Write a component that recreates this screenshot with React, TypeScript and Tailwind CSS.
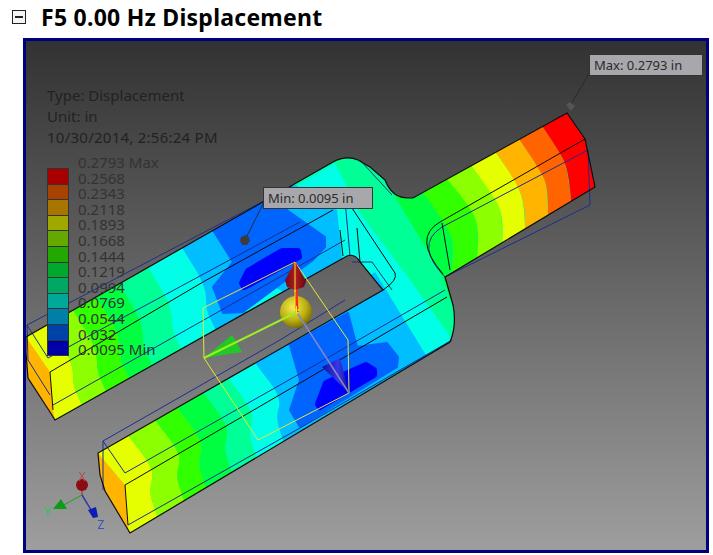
type Pt = [number, number];

const YELLOW = "#e6ff00";
const LIME = "#8cff00";
const BRIGHT = "#32ff00";
const GREEN = "#00ff40";
const SPRING = "#00ff96";
const CYAN = "#00ffe6";
const SKY = "#00beff";
const BLUE = "#0064ff";
const DEEP = "#0000ff";

const swatches = [
  "#a80000", "#a84200", "#a87600", "#a0a800", "#64a800", "#22a800",
  "#00a82b", "#00a864", "#00a89a", "#007fa8", "#0043a8", "#0000a8",
];

const values = [
  "0.2793 Max", "0.2568", "0.2343", "0.2118", "0.1893", "0.1668", "0.1444",
  "0.1219", "0.0994", "0.0769", "0.0544", "0.032", "0.0095 Min",
];

const silhouette =
  "M567 113 L585 139 L595 187 L445 277 L453 305 Q457 325 450 342 L130 533 L105 491 L100 475 L98 453 L383 290 L360 262 Q355 253 347 256 L55 420 L50 412 L28 378 L26 352 L26 337 L333 162 Q346 155 358 160 L370 167 L385 180 Q392 198 408 198 L413 198 Z";

const upperY = (x: number) => 337 - (x - 26) * 0.57;
const lowerY = (x: number) => 453 - (x - 98) * 0.572;

const upperOffsets: Pt[] = [[-4, -8], [0, 0], [24, 38], [24, 62], [31, 76], [38, 92]];
const lowerOffsets: Pt[] = [[-4, -8], [0, 0], [27, 34], [21, 54], [26, 72], [34, 92]];

function curve(x: number, y: number, offsets: Pt[]): Pt[] {
  return offsets.map(([dx, dy]) => [x + dx, y + dy] as Pt);
}

// runs a rounded line through the points, straight near both ends
function smooth(pts: Pt[], start: string) {
  let d = `${start}${pts[0][0]} ${pts[0][1]}`;
  for (let i = 1; i < pts.length - 1; i++) {
    const mx = (pts[i][0] + pts[i + 1][0]) / 2;
    const my = (pts[i][1] + pts[i + 1][1]) / 2;
    d += ` Q${pts[i][0]} ${pts[i][1]} ${mx} ${my}`;
  }
  const last = pts[pts.length - 1];
  return `${d} L${last[0]} ${last[1]}`;
}

function band(a: Pt[], b: Pt[]) {
  return `${smooth(a, "M")} ${smooth([...b].reverse(), "L")} Z`;
}

const upperStops: [number, string][] = [
  [10, YELLOW], [49, LIME], [73, BRIGHT], [96, GREEN], [119, SPRING], [148, CYAN], [182, SKY], [213, SKY],
];
const lowerStops: [number, string][] = [
  [80, YELLOW], [128, LIME], [155, BRIGHT], [177, GREEN], [203, SPRING], [228, CYAN], [255, SKY], [290, SKY],
];

const handleCurves: Pt[][] = [
  [[385, 180], [423, 243], [443, 277], [450, 300]],
  [[420, 188], [448, 227], [455, 247], [450, 280]],
  [[446, 178], [472, 208], [479, 230], [477, 260]],
  [[470, 164], [495, 197], [503, 217], [502, 250]],
  [[494, 150], [517, 182], [525, 207], [525, 235]],
  [[517, 136], [542, 172], [548, 190], [548, 222]],
  [[540, 123], [560, 152], [568, 170], [572, 210]],
  [[600, 100], [620, 140], [620, 180], [620, 210]],
];
const handleColors = [GREEN, BRIGHT, LIME, YELLOW, "#ffb400", "#ff6400", "#ff0000"];

const blackLines = [
  "M50 372 L203 282 L333 210",
  "M125 485 L300 383 L343 358 L447 297",
  "M440 222 L585 139",
  "M442 223 L450 270",
  "M440 222 Q412 238 443 274",
  "M340 230 L343 256",
  "M357 228 L360 262",
  "M350 205 L395 273 Q398 280 383 290",
  "M50 372 L53 410",
  "M125 485 L128 525",
];

const blueLines = [
  "M27 325 L260 203 L292 186",
  "M27 325 L48 358 L300 222",
  "M27 325 L28 360 L50 395",
  "M53 405 L218 312 L345 240",
  "M103 441 L280 340 L345 300",
  "M103 441 L125 473 L310 368 L445 290",
  "M103 441 L103 490",
  "M128 525 L300 428 L452 340",
  "M442 227 L588 150 L590 205 L445 277",
  "M442 227 Q414 245 445 277",
  "M345 200 L350 256",
  "M352 262 L372 262 L392 290",
  "M360 160 L392 195",
];

export default function App() {
  return (
    <div className="w-[713px] h-[555px] bg-white font-['Noto_Sans',sans-serif] overflow-hidden">
      <div className="flex items-center h-[38px] pl-[12px] pb-[4px]">
        <div className="w-[14px] h-[14px] border-[1.5px] border-[#222] flex items-center justify-center bg-[#f4f4f4]">
          <div className="w-[8px] h-[2px] bg-[#222]" />
        </div>
        <h1 className="ml-[15px] text-[23px] tracking-[0.25px] leading-none font-bold text-black">F5 0.00 Hz Displacement</h1>
      </div>
      <div className="relative ml-[23px] w-[686px] h-[515px] border-[3px] border-[#00007f] overflow-hidden">
        <svg viewBox="26 41 680 509" className="block w-[680px] h-[509px] blur-[0.3px]">
          <defs>
            <linearGradient id="bg" x1="0" y1="0" x2="0" y2="1">
              <stop offset="0" stopColor="#323232" />
              <stop offset="1" stopColor="#9e9e9e" />
            </linearGradient>
            <radialGradient id="gold" cx="0.4" cy="0.35" r="0.7">
              <stop offset="0" stopColor="#f4ee50" />
              <stop offset="0.6" stopColor="#bcae10" />
              <stop offset="1" stopColor="#6e6408" />
            </radialGradient>
            <linearGradient id="redCone" x1="0" y1="0" x2="1" y2="0">
              <stop offset="0" stopColor="#6e0a14" />
              <stop offset="0.5" stopColor="#b01a20" />
              <stop offset="1" stopColor="#5e0a10" />
            </linearGradient>
            <linearGradient id="blueCone" x1="0" y1="0" x2="1" y2="0">
              <stop offset="0" stopColor="#1010a0" />
              <stop offset="0.6" stopColor="#3838e8" />
              <stop offset="1" stopColor="#12127a" />
            </linearGradient>
            <clipPath id="part">
              <path d={silhouette} />
            </clipPath>
          </defs>

          <rect x="26" y="41" width="680" height="509" fill="url(#bg)" />

          <g clipPath="url(#part)">
            <rect x="20" y="100" width="600" height="450" fill={SPRING} />
            <polygon points="335,163 360,213 410,280 460,350 300,480 100,300" fill={CYAN} />
            <polygon points="292,183 337,210 342,258 300,300 220,260" fill={SKY} />
            <polygon points="375,272 432,365 300,470 250,360" fill={SKY} />

            {upperStops.map(([x, color], i) => {
              const next = upperStops[i + 1];
              if (!next) return null;
              return (
                <path
                  key={x}
                  d={band(curve(x, upperY(x), upperOffsets), curve(next[0], upperY(next[0]), upperOffsets))}
                  fill={color}
                />
              );
            })}
            {lowerStops.map(([x, color], i) => {
              const next = lowerStops[i + 1];
              if (!next) return null;
              return (
                <path
                  key={x}
                  d={band(curve(x, lowerY(x), lowerOffsets), curve(next[0], lowerY(next[0]), lowerOffsets))}
                  fill={color}
                />
              );
            })}

            {handleColors.map((color, i) => (
              <path key={color} d={band(handleCurves[i], handleCurves[i + 1])} fill={color} />
            ))}

            <polygon points="213,230 262,190 277,203 325,237 325,247 313,260 243,312 223,313 213,287 233,262" fill={BLUE} stroke={BLUE} strokeWidth="2" strokeLinejoin="round" />
            <polygon points="242,283 248,271 282,251 298,251 299,257 292,261 250,284 244,287" fill={DEEP} stroke={DEEP} strokeWidth="6" strokeLinejoin="round" />
            <polygon points="290,345 348,313 357,347 387,343 398,357 397,367 300,427 290,410 300,380" fill={BLUE} stroke={BLUE} strokeWidth="2" strokeLinejoin="round" />
            <polygon points="318,404 326,383 348,373 366,365 374,370 374,375 320,407" fill={DEEP} stroke={DEEP} strokeWidth="6" strokeLinejoin="round" />

            <polygon points="26,337 50,372 53,410 55,420 20,420 20,337" fill="#ffb400" />
            <polygon points="98,453 125,485 128,527 130,540 90,540 90,453" fill="#ffb400" />
          </g>

          <g fill="none" stroke="#1c2f8c" strokeWidth="1">
            {blueLines.map((d) => (
              <path key={d} d={d} />
            ))}
          </g>
          <path d={silhouette} fill="none" stroke="#0c0c0c" strokeWidth="1.2" />
          <g fill="none" stroke="#0c0c0c" strokeWidth="1">
            {blackLines.map((d) => (
              <path key={d} d={d} />
            ))}
          </g>

          {/* leaders to the min and max labels */}
          <path d="M266 198 L245 240" stroke="#2a2a2a" fill="none" />
          <polygon points="241,237 245,235 249,237 250,241 247,245 242,245 240,241" fill="#3c3c40" />
          <path d="M590 72 L570 106" stroke="#2a2a2a" fill="none" />
          <polygon points="566,105 570,102 575,106 571,111" fill="#555" />

          {/* move triad */}
          <polygon points="295,262 203,308 204,358 258,440 349,393 348,340" fill="none" stroke="#e8e830" strokeWidth="1" />
          <circle cx="296" cy="312" r="16" fill="url(#gold)" />
          <path d="M295 262 L297 312" stroke="#ff2a10" strokeWidth="3" />
          <path d="M295 262 L295 312" stroke="#e8e830" strokeWidth="1" />
          <polygon points="295,262 285,280 287,287 295,290 304,287 306,281" fill="url(#redCone)" />
          <path d="M295 262 L295 292" stroke="#e8e830" strokeWidth="1" />
          <polygon points="204,358 232,335 242,352" fill="#22c828" />
          <path d="M204 358 L297 312" stroke="#9cf020" strokeWidth="2" />
          <polygon points="349,393 322,367 340,358" fill="url(#blueCone)" />
          <path d="M349 393 L298 314" stroke="#8686c4" strokeWidth="1.5" />
          <path d="M293 310 h7 M296.500 306 v7" stroke="#f0f040" strokeWidth="1" />

          {/* view triad */}
          <path d="M82 495 L82 485" stroke="#b02020" strokeWidth="1" />
          <path d="M82 495 L60 507" stroke="#20a020" strokeWidth="1" />
          <path d="M82 495 L93 513" stroke="#2a3ca8" strokeWidth="1.5" />
          <circle cx="82" cy="485" r="6" fill="#8c0c14" />
          <polygon points="53,509 61,499 67,509" fill="#0c9c18" />
          <polygon points="88,510 96,507 98,517 93,518" fill="#0c1cb4" />
          <text x="82" y="481" textAnchor="middle" fontSize="12" fill="#b84a4a" fontFamily="'Noto Sans',sans-serif">X</text>
          <text x="48" y="516" textAnchor="middle" fontSize="12" fill="#28c850" fontFamily="'Noto Sans',sans-serif">Y</text>
          <text x="101" y="529" textAnchor="middle" fontSize="12" fill="#3a50c8" fontFamily="'Noto Sans',sans-serif">Z</text>
        </svg>

        {/* legend sits on top of the model */}
        <div className="absolute left-[21px] top-[44px] text-[15px] leading-[21px] text-[#222]">
          <p>Type: Displacement</p>
          <p>Unit: in</p>
          <p className="tracking-[0.25px]">10/30/2014, 2:56:24 PM</p>
          <div className="flex mt-[7px]">
            <ul className="mt-[13px] self-start border-b border-[#333]">
              {swatches.map((color) => (
                <li
                  key={color}
                  className="w-[22px] h-[15.600px] border-x border-t border-[#333]"
                  style={{ backgroundColor: color }}
                />
              ))}
            </ul>
            <ul className="ml-[9px] text-[#333]">
              {values.map((value) => (
                <li key={value} className="h-[15.600px] leading-[15.600px]">
                  {value}
                </li>
              ))}
            </ul>
          </div>
        </div>

        <div className="absolute left-[237px] top-[146px] w-[110px] h-[22px] border border-[#333] bg-[#a8a8ac] pl-[4px] text-[13px] leading-[20px] text-[#2a2a2a]">
          Min: 0.0095 in
        </div>
        <div className="absolute left-[563px] top-[13px] w-[114px] h-[22px] border border-[#333] bg-[#a8a8ac] pl-[4px] text-[13px] leading-[20px] text-[#2a2a2a]">
          Max: 0.2793 in
        </div>
      </div>
    </div>
  );
}
